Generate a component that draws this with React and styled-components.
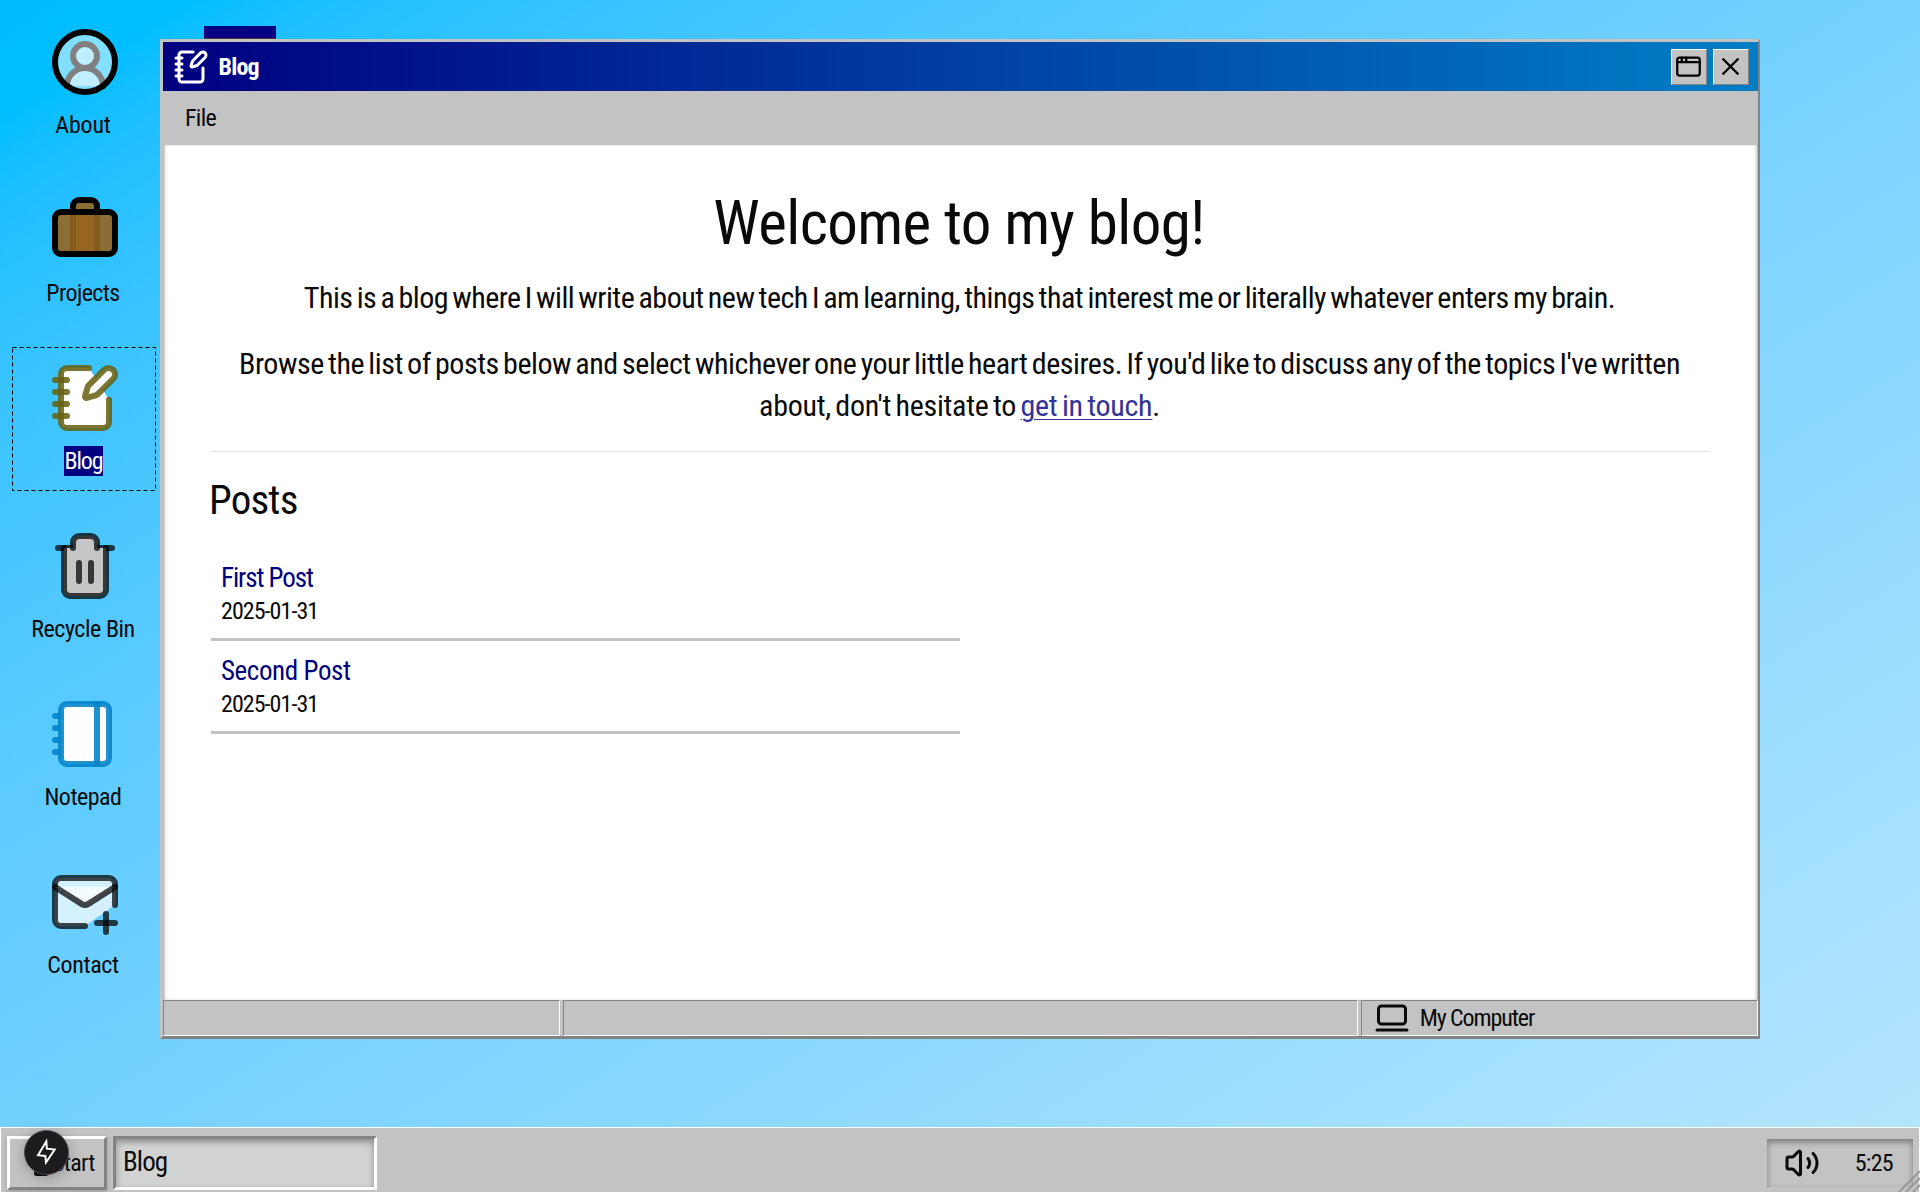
import React from 'react';
import styled, { createGlobalStyle } from 'styled-components';

const GlobalStyle = createGlobalStyle`
  *, *::before, *::after { box-sizing: border-box; }
  html, body, #root { height: 100%; margin: 0; }
  body {
    overflow: hidden;
    color: #0a0a0a;
    font-family: 'Roboto Condensed', Roboto, 'Liberation Sans', sans-serif;
    font-size: 24px;
    line-height: 30px;
  }
`;

const Screen = styled.div`
  position: relative;
  display: flex;
  flex-direction: column;
  height: 1192px;
  overflow: hidden;
  background: linear-gradient(to bottom right in oklab, oklch(74.6% 0.16 232.661), oklch(90.1% 0.058 230.902));
`;

const Desktop = styled.main`
  position: relative;
  flex: 1;
  padding: 11px 12px;
`;

const Text = styled.span`
  white-space: nowrap;
  letter-spacing: ${(p) => p.$track || 0}px;
`;

/* ---------- desktop shortcuts ---------- */

const Shortcuts = styled.nav`
  display: flex;
  flex-direction: column;
  gap: 24px;
  width: 144px;
`;

const Shortcut = styled.a`
  display: flex;
  flex-direction: column;
  align-items: center;
  gap: 12px;
  height: 144px;
  padding: 15px 0 0 1px;
`;

const FocusDash = styled.rect`
  fill: none;
  stroke: #000;
  stroke-width: 1;
  stroke-dasharray: 4 3;
`;

const FocusFrame = styled.svg`
  position: absolute;
  left: 12px;
  top: 347px;
  width: 144px;
  height: 144px;
`;

const ShortcutLabel = styled(Text)`
  height: 30px;
  margin-right: ${(p) => (p.$selected ? 2 : 3)}px;
  color: ${(p) => (p.$selected ? '#fff' : '#0a0a0a')};
  background: ${(p) => (p.$selected ? '#000080' : 'transparent')};
`;

const HiddenLabel = styled.div`
  position: absolute;
  left: 204px;
  top: 26px;
  width: 72px;
  height: 14px;
  background: #000080;
  border-bottom: 2px solid #4a3a3a;
`;

const Glyph = styled.svg`
  display: block;
  flex: none;
  width: ${(p) => p.$size}px;
  height: ${(p) => p.$size}px;
  fill: ${(p) => p.$fill || 'none'};
  stroke: ${(p) => p.$stroke || '#0a0a0a'};
  stroke-width: 2;
  stroke-linecap: round;
  stroke-linejoin: round;
`;

const glyphs = {
  user: (
    <>
      <path d="M18 20a6 6 0 0 0-12 0" />
      <circle cx="12" cy="10" r="4" />
      <circle cx="12" cy="12" r="10" />
    </>
  ),
  briefcase: (
    <>
      <path d="M16 20V4a2 2 0 0 0-2-2h-4a2 2 0 0 0-2 2v16" />
      <rect width="20" height="14" x="2" y="6" rx="2" />
    </>
  ),
  notebookPen: (
    <>
      <path d="M13.4 2H6a2 2 0 0 0-2 2v16a2 2 0 0 0 2 2h12a2 2 0 0 0 2-2v-7.4" />
      <path d="M2 6h4" />
      <path d="M2 10h4" />
      <path d="M2 14h4" />
      <path d="M2 18h4" />
      <path d="M21.378 5.626a1 1 0 1 0-3.004-3.004l-5.01 5.012a2 2 0 0 0-.506.854l-.837 2.87a.5.5 0 0 0 .62.62l2.87-.837a2 2 0 0 0 .854-.506z" />
    </>
  ),
  trash: (
    <>
      <path d="M3 6h18" />
      <path d="M19 6v14c0 1-1 2-2 2H7c-1 0-2-1-2-2V6" />
      <path d="M8 6V4c0-1 1-2 2-2h4c1 0 2 1 2 2v2" />
      <path d="M10 11v6" />
      <path d="M14 11v6" />
    </>
  ),
  notebook: (
    <>
      <path d="M2 6h4" />
      <path d="M2 10h4" />
      <path d="M2 14h4" />
      <path d="M2 18h4" />
      <rect width="16" height="20" x="4" y="2" rx="2" />
      <path d="M16 2v20" />
    </>
  ),
  mailPlus: (
    <>
      <path d="M22 13V6a2 2 0 0 0-2-2H4a2 2 0 0 0-2 2v12c0 1.1.9 2 2 2h8" />
      <path d="m22 7-8.97 5.7a1.94 1.94 0 0 1-2.06 0L2 7" />
      <path d="M19 16v6" />
      <path d="M16 19h6" />
    </>
  ),
  appWindow: (
    <>
      <rect x="2" y="4" width="20" height="16" rx="2" />
      <path d="M10 4v4" />
      <path d="M2 8h20" />
      <path d="M6 4v4" />
    </>
  ),
  close: (
    <>
      <path d="M18 6 6 18" />
      <path d="m6 6 12 12" />
    </>
  ),
  laptop: (
    <>
      <rect width="18" height="12" x="3" y="4" rx="2" />
      <path d="M2 20h20" />
    </>
  ),
  volume: (
    <>
      <path d="M11 4.702a.705.705 0 0 0-1.203-.498L6.413 7.587A1.4 1.4 0 0 1 5.416 8H3a1 1 0 0 0-1 1v6a1 1 0 0 0 1 1h2.416a1.4 1.4 0 0 1 .997.413l3.383 3.384A.705.705 0 0 0 11 19.298z" />
      <path d="M16 9a5 5 0 0 1 0 6" />
      <path d="M19.364 18.364a9 9 0 0 0 0-12.728" />
    </>
  ),
  monitor: (
    <>
      <rect width="12" height="8" x="5" y="4" rx="2" />
      <rect width="11" height="8" x="8.5" y="15" rx="1" fill="#0a0a0a" />
    </>
  ),
};

const Icon = ({ name, size, fill, stroke }) => (
  <Glyph viewBox="0 0 24 24" $size={size} $fill={fill} $stroke={stroke} aria-hidden="true">
    {glyphs[name]}
  </Glyph>
);

/* ---------- window ---------- */

const Window = styled.section`
  position: absolute;
  left: 160px;
  top: 39px;
  width: 1600px;
  height: 1000px;
  display: flex;
  flex-direction: column;
  border-style: solid;
  border-width: 3px 2px 3px 3px;
  border-color: #c3c3c3 #838383 #838383 #c3c3c3;
  background: #c3c3c3;
`;

const TitleBar = styled.header`
  display: flex;
  align-items: center;
  gap: 10px;
  height: 49px;
  padding: 0 9px 0 9.5px;
  background: linear-gradient(to right, #000080, #007ec5);
`;

const WindowTitle = styled.h1`
  flex: 1;
  margin: 0;
  color: #fff;
  font-size: 24px;
  font-weight: 700;
  letter-spacing: -0.8px;
`;

const WindowButtons = styled.div`
  display: flex;
  gap: 6px;
`;

const WindowButton = styled.button`
  display: grid;
  place-items: center;
  width: 36px;
  height: 36px;
  padding: 0 1px 1px 0;
  background: #c3c3c3;
  border: 1px solid;
  border-color: #fff #838383 #838383 #fff;
`;

const MenuBar = styled.div`
  display: flex;
  align-items: center;
  height: 54px;
  padding-left: 22px;
`;

const Content = styled.article`
  flex: 1;
  min-height: 0;
  padding: 48px 47px 0;
  background: #fff;
  border: solid #b9b9b9;
  border-width: 0 1px;
  box-shadow: inset 2px 0 3px -1px rgba(0, 0, 0, 0.22), inset -2px 0 3px -1px rgba(0, 0, 0, 0.22);
`;

const Headline = styled.h2`
  margin: 0 3px 24px 0;
  font-size: 61px;
  font-weight: 400;
  line-height: 60px;
  letter-spacing: -0.6px;
  text-align: center;
`;

const Paragraph = styled.p`
  margin: 0 2px 24px 0;
  font-size: 30px;
  line-height: 42px;
  text-align: center;
  letter-spacing: ${(p) => p.$track}px;
  word-spacing: -2.2px;
`;

const ClosingLine = styled(Text)`
  a {
    color: #333399;
    text-decoration: underline;
    text-decoration-thickness: 1px;
    text-underline-offset: 3px;
  }
`;

const Divider = styled.hr`
  height: 1px;
  margin: 0 0 28px;
  border: 0;
  background: #e0e0e0;
`;

const SectionTitle = styled.h3`
  margin: 0 0 28px -2px;
  font-size: 41px;
  font-weight: 400;
  line-height: 40px;
  letter-spacing: -0.8px;
`;

const PostList = styled.ul`
  width: 749px;
  margin: 0;
  padding: 0;
  list-style: none;
`;

const PostRow = styled.li`
  display: flex;
  flex-direction: column;
  height: 93px;
  padding: 12px 10px;
  border-bottom: 3px solid #c3c3c3;
`;

const PostLink = styled(Text)`
  color: #000080;
  font-size: 27px;
  line-height: 36px;
`;

const StatusBar = styled.footer`
  display: grid;
  grid-template-columns: 1fr 2fr 1fr;
  grid-template-rows: 36px;
  gap: 3px;
  height: 36px;
`;

const StatusCell = styled.div`
  display: flex;
  align-items: center;
  gap: 10px;
  height: 36px;
  padding-left: 12px;
  border: 1px solid;
  border-color: #838383 #fff #fff #838383;
`;

/* ---------- taskbar ---------- */

const Taskbar = styled.footer`
  position: relative;
  display: flex;
  align-items: flex-start;
  height: 65px;
  padding: 8px 6px 0 6px;
  background: #c3c3c3;
  border: 1px solid #fff;
  border-bottom: 0;
`;

const StartButton = styled.button`
  display: flex;
  align-items: center;
  width: 100px;
  height: 54px;
  padding: 0 0 0 16px;
  color: #0a0a0a;
  font: inherit;
  background: #c3c3c3;
  border: 3px solid;
  border-color: #fff #838383 #838383 #fff;
  box-shadow: 0 2px 5px rgba(0, 0, 0, 0.2);
`;

const TaskButton = styled.button`
  width: 264px;
  height: 54px;
  margin-left: 6px;
  padding: 0 0 2px 7px;
  color: #0a0a0a;
  font: inherit;
  font-size: 27px;
  text-align: left;
  letter-spacing: -0.9px;
  background: #d1d3d2;
  border: 3px solid;
  border-color: #838383 #fff #fff #838383;
  box-shadow: inset 0 3px 6px rgba(0, 0, 0, 0.35);
`;

const Tray = styled.div`
  display: flex;
  align-items: center;
  justify-content: space-between;
  width: 146px;
  height: 48px;
  margin: 3px 0 0 auto;
  padding: 0 20px 0 17px;
  box-shadow: inset 0 3px 6px rgba(0, 0, 0, 0.38);
`;

const DevBadge = styled.div`
  position: absolute;
  left: 23px;
  top: 2px;
  width: 45px;
  height: 45px;
  border-radius: 50%;
  background: #1c1c1f;
  border: 1px solid #4a4a4c;
  box-shadow: 0 3px 14px rgba(0, 0, 0, 0.25);
`;

const Bolt = styled.svg`
  display: block;
  width: 43px;
  height: 43px;
  fill: none;
  stroke: #fff;
  stroke-width: 2;
  stroke-linejoin: miter;
`;

const Grip = styled.svg`
  position: absolute;
  right: -1px;
  bottom: 0;
  width: 22px;
  height: 22px;
  fill: none;
  stroke: #999;
  stroke-width: 2;
`;

const shortcuts = [
  { label: 'About', icon: 'user', fill: 'rgba(255,255,255,0.5)', stroke: '#000', track: -0.2 },
  { label: 'Projects', icon: 'briefcase', fill: 'rgba(150,101,31,0.9)', stroke: '#000', track: -0.6 },
  { label: 'Blog', icon: 'notebookPen', fill: '#fff', stroke: 'rgba(104,96,16,0.86)', track: -1.1, selected: true },
  { label: 'Recycle Bin', icon: 'trash', fill: '#c6c6c6', stroke: 'rgba(0,0,0,0.72)', track: -0.45 },
  { label: 'Notepad', icon: 'notebook', fill: '#fff', stroke: 'rgba(0,130,200,0.88)', track: -0.5 },
  { label: 'Contact', icon: 'mailPlus', fill: 'rgba(255,255,255,0.72)', stroke: 'rgba(0,0,0,0.72)', track: -0.4 },
];

const posts = [
  { title: 'First Post', date: '2025-01-31', track: -1.06 },
  { title: 'Second Post', date: '2025-01-31', track: -0.4 },
];

export default function App() {
  return (
    <Screen>
      <GlobalStyle />
      <Desktop>
        <Shortcuts>
          {shortcuts.map((s) => (
            <Shortcut key={s.label}>
              <Icon name={s.icon} size={72} fill={s.fill} stroke={s.stroke} />
              <ShortcutLabel $track={s.track} $selected={s.selected}>
                {s.label}
              </ShortcutLabel>
            </Shortcut>
          ))}
        </Shortcuts>
        <FocusFrame viewBox="0 0 144 144" aria-hidden="true">
          <FocusDash x="0.5" y="0.5" width="143" height="143" />
        </FocusFrame>
        <HiddenLabel />

        <Window>
          <TitleBar>
            <Icon name="notebookPen" size={36} stroke="#fff" />
            <WindowTitle>Blog</WindowTitle>
            <WindowButtons>
              <WindowButton aria-label="Maximize">
                <Icon name="appWindow" size={27} stroke="#000" />
              </WindowButton>
              <WindowButton aria-label="Close">
                <Icon name="close" size={29} stroke="#000" />
              </WindowButton>
            </WindowButtons>
          </TitleBar>
          <MenuBar>
            <Text $track={-0.7}>File</Text>
          </MenuBar>
          <Content>
            <Headline>Welcome to my blog!</Headline>
            <Paragraph $track={-0.5}>
              This is a blog where I will write about new tech I am learning, things that interest me or literally
              whatever enters my brain.
            </Paragraph>
            <Paragraph $track={-0.45}>
              Browse the list of posts below and select whichever one your little heart desires. If you'd like to
              discuss any of the topics I've written
              <br />
              <ClosingLine $track={-0.27}>
                about, don't hesitate to <a>get in touch</a>.
              </ClosingLine>
            </Paragraph>
            <Divider />
            <SectionTitle>Posts</SectionTitle>
            <PostList>
              {posts.map((p) => (
                <PostRow key={p.title}>
                  <PostLink $track={p.track}>{p.title}</PostLink>
                  <Text $track={-0.95}>{p.date}</Text>
                </PostRow>
              ))}
            </PostList>
          </Content>
          <StatusBar>
            <StatusCell />
            <StatusCell />
            <StatusCell>
              <Icon name="laptop" size={36} />
              <Text $track={-1.1}>My Computer</Text>
            </StatusCell>
          </StatusBar>
        </Window>
      </Desktop>

      <Taskbar>
        <StartButton>
          <Icon name="monitor" size={26} />
          <Text $track={-0.7}>Start</Text>
        </StartButton>
        <TaskButton>Blog</TaskButton>
        <Tray>
          <Icon name="volume" size={36} />
          <Text $track={-0.7}>5:25</Text>
        </Tray>
        <DevBadge>
          <Bolt viewBox="1 1 43 43" aria-hidden="true">
            <path d="M22.3 11.5 14 25.2l7.3.8.7 6.5 8.7-13-7.8-.8z" />
          </Bolt>
        </DevBadge>
        <Grip viewBox="0 0 22 22" aria-hidden="true">
          <path d="M1 22 22 1M8 22 22 8M15 22l7-7" />
        </Grip>
      </Taskbar>
    </Screen>
  );
}
